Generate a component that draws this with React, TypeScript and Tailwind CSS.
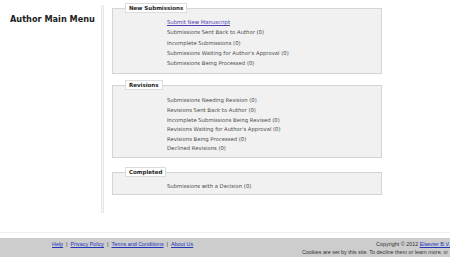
import React from "react";

const verdana = { fontFamily: '"DejaVu Sans", Verdana, sans-serif' };

function Box({
  title,
  items,
  className,
  lh,
}: {
  title: string;
  items: { t: string; link?: boolean }[];
  className?: string;
  lh: string;
}) {
  return (
    <fieldset className={`border border-[#d4d4d4] bg-[#f1f1f1] w-[270px] px-0 ${className ?? ""}`}>
      <legend className="ml-[12px] px-[3px] bg-white border border-[#dcdcdc] text-[5.5px] leading-[8px] font-bold text-[#222]">
        {title}
      </legend>
      <ul className={`pl-[54px] text-[5.3px] text-[#4a4a4a] ${lh}`}>
        {items.map((it) =>
          it.link ? (
            <li key={it.t}>
              <a className="text-[#4a3fb0] underline">{it.t}</a>
            </li>
          ) : (
            <li key={it.t}>{it.t}</li>
          )
        )}
      </ul>
    </fieldset>
  );
}

export default function App() {
  return (
    <div className="w-[450px] h-[257px] bg-white flex flex-col overflow-hidden" style={verdana}>
      <div className="flex h-[232px]">
        <div className="w-[101px] pl-[10px] pt-[14px]">
          <h1 className="text-[8.2px] leading-[10px] font-bold text-[#222]">Author Main Menu</h1>
        </div>
        <div className="mt-[5px] h-[208px] w-[3px] border-l border-r border-[#e6e6e6] bg-[#f7f7f7]" />
        <div className="pl-[8px] pt-[3px] flex flex-col">
          <Box
            className="pb-[5px] pt-[4px]"
            lh="leading-[10.3px]"
            title="New Submissions"
            items={[
              { t: "Submit New Manuscript", link: true },
              { t: "Submissions Sent Back to Author (0)" },
              { t: "Incomplete Submissions (0)" },
              { t: "Submissions Waiting for Author's Approval (0)" },
              { t: "Submissions Being Processed (0)" },
            ]}
          />
          <Box
            className="mt-[6px] pb-[3px] pt-[6px]"
            lh="leading-[9.6px]"
            title="Revisions"
            items={[
              { t: "Submissions Needing Revision (0)" },
              { t: "Revisions Sent Back to Author (0)" },
              { t: "Incomplete Submissions Being Revised (0)" },
              { t: "Revisions Waiting for Author's Approval (0)" },
              { t: "Revisions Being Processed (0)" },
              { t: "Declined Revisions (0)" },
            ]}
          />
          <Box
            className="mt-[9px] pb-[2px] pt-[5px]"
            lh="leading-[9.7px]"
            title="Completed"
            items={[{ t: "Submissions with a Decision (0)" }]}
          />
        </div>
      </div>
      <div className="h-[6px] border-t border-[#eeeeee]" />
      <div
        className="flex-1 bg-[#cdcdcd] flex text-[5.4px] leading-[8px] text-[#333] pt-[2px]"
        style={{ fontFamily: '"Liberation Sans", Arial, sans-serif' }}
      >
        <div className="pl-[52px] w-[250px] whitespace-nowrap">
          <a className="text-[#2233bb] underline">Help</a>
          <span className="mx-[3px]">|</span>
          <a className="text-[#2233bb] underline">Privacy Policy</a>
          <span className="mx-[3px]">|</span>
          <a className="text-[#2233bb] underline">Terms and Conditions</a>
          <span className="mx-[3px]">|</span>
          <a className="text-[#2233bb] underline">About Us</a>
        </div>
        <div className="flex-1 flex flex-col items-end whitespace-nowrap overflow-hidden">
          <div>
            Copyright © 2012 <a className="text-[#2233bb] underline">Elsevier B.V.</a>
          </div>
          <div className="self-start pl-[52px]">
            Cookies are set by this site. To decline them or learn more, vi
          </div>
        </div>
      </div>
    </div>
  );
}
